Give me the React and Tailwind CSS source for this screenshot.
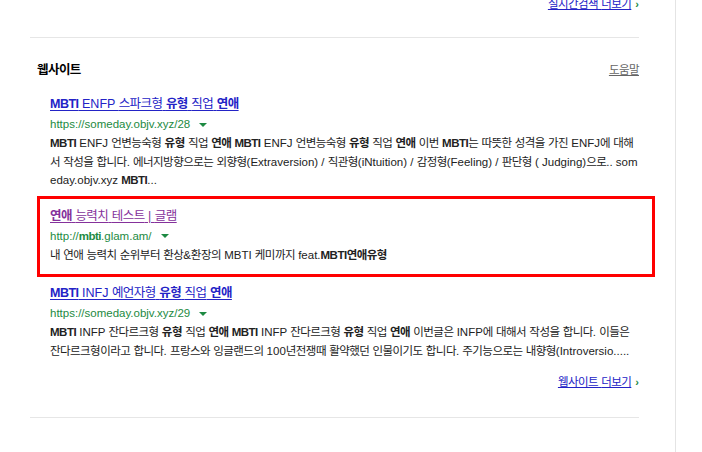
import React from 'react'

const font = { fontFamily: '"Liberation Sans", "Noto Sans CJK KR", sans-serif' }

const results = [
  {
    title: [['MBTI', true], [' ENFP 스파크형 ', false], ['유형', true], [' 직업 ', false], ['연애', true]],
    url: [['https://someday.objv.xyz/28', false]],
    desc: [
      ['MBTI', true], [' ENFJ 언변능숙형 ', false], ['유형', true], [' 직업 ', false], ['연애', true], [' ', false],
      ['MBTI', true], [' ENFJ 언변능숙형 ', false], ['유형', true], [' 직업 ', false], ['연애', true],
      [' 이번 ', false], ['MBTI', true],
      ['는 따뜻한 성격을 가진 ENFJ에 대해서 작성을 합니다. 에너지방향으로는 외향형(Extraversion) / 직관형(iNtuition) / 감정형(Feeling) / 판단형 ( Judging)으로.. someday.objv.xyz ', false],
      ['MBTI', true], ['...', false],
    ],
  },
  {
    visited: true,
    highlight: true,
    title: [['연애', true], [' 능력치 테스트 | 글램', false]],
    url: [['http://', false], ['mbti', true], ['.glam.am/', false]],
    desc: [['내 연애 능력치 순위부터 환상&환장의 MBTI 케미까지 feat.', false], ['MBTI연애유형', true]],
  },
  {
    title: [['MBTI', true], [' INFJ 예언자형 ', false], ['유형', true], [' 직업 ', false], ['연애', true]],
    url: [['https://someday.objv.xyz/29', false]],
    desc: [
      ['MBTI', true], [' INFP 잔다르크형 ', false], ['유형', true], [' 직업 ', false], ['연애', true], [' ', false],
      ['MBTI', true], [' INFP 잔다르크형 ', false], ['유형', true], [' 직업 ', false], ['연애', true],
      [' 이번글은 INFP에 대해서 작성을 합니다. 이들은 잔다르크형이라고 합니다. 프랑스와 잉글랜드의 100년전쟁때 활약했던 인물이기도 합니다. 주기능으로는 내향형(Introversi', false],
      ['o.....', false],
    ],
  },
]

// hangul runs are set a little tighter than the latin text
const hangul = /([\uac00-\ud7a3]+)/
const Txt = ({ text }) =>
  text.split(hangul).map((s, i) =>
    i % 2 === 1 ? (
      <span key={i} className="tracking-[-0.55px]">{s}</span>
    ) : (
      s
    )
  )

const Parts = ({ parts }) =>
  parts.map(([t, b], i) => (
    <span key={i} className={b ? 'font-bold tracking-[-0.5px]' : ''}>
      <Txt text={t} />
    </span>
  ))

const Result = ({ r }) => (
  <div
    className={
      r.highlight
        ? 'border-[3px] border-[#ff0000] -ml-[13px] -mr-[16px] pl-[10px] pr-[13px] pt-[7px] pb-[10px]'
        : ''
    }
  >
    <a
      href="#"
      className={
        'block w-fit text-[12.5px] leading-[20px] underline underline-offset-2 ' +
        (r.visited ? 'text-[#85319b]' : 'text-[#2323c6]')
      }
    >
      <Parts parts={r.title} />
    </a>
    <div className="flex items-center text-[11.5px] leading-[20px] text-[#1d8a42]">
      <span><Parts parts={r.url} /></span>
      <span className="ml-[9px] mt-[1px] w-0 h-0 border-l-[4px] border-r-[4px] border-t-[4px] border-l-transparent border-r-transparent border-t-[#1d8a42]" />
    </div>
    <p className="text-[11.5px] leading-[18.5px] text-[#222] break-all">
      <Parts parts={r.desc} />
    </p>
  </div>
)

export default function App() {
  return (
    <div className="w-[702px] h-[452px] overflow-hidden bg-white flex" style={font}>
      <div className="w-[676px] shrink-0 border-r border-[#e4e4e4] pl-[30px] pr-[36px]">
        <div className="-mt-[6px] flex justify-end items-center text-[11.5px] leading-[20px]">
          <a href="#" className="text-[#2323c6] underline"><Txt text="실시간검색 더보기" /></a>
          <span className="ml-[4px] text-[#1d8a42] font-bold text-[11px]">›</span>
        </div>

        <div className="mt-[23px] border-t border-[#e6e6e6]" />

        <div className="mt-[22px] flex justify-between items-center leading-[20px]">
          <h2 className="pl-[7px] text-[12.5px] font-bold text-black"><Txt text="웹사이트" /></h2>
          <a href="#" className="text-[11.5px] text-[#666] underline"><Txt text="도움말" /></a>
        </div>

        <div className="mt-[14px] pl-[20px] flex flex-col gap-[6px]">
          {results.map((r, i) => (
            <Result key={i} r={r} />
          ))}
        </div>

        <div className="mt-[12px] flex justify-end items-center text-[11.5px] leading-[20px]">
          <a href="#" className="text-[#2323c6] underline"><Txt text="웹사이트 더보기" /></a>
          <span className="ml-[4px] text-[#1d8a42] font-bold text-[11px]">›</span>
        </div>

        <div className="mt-[25px] border-t border-[#e6e6e6]" />
      </div>
    </div>
  )
}
